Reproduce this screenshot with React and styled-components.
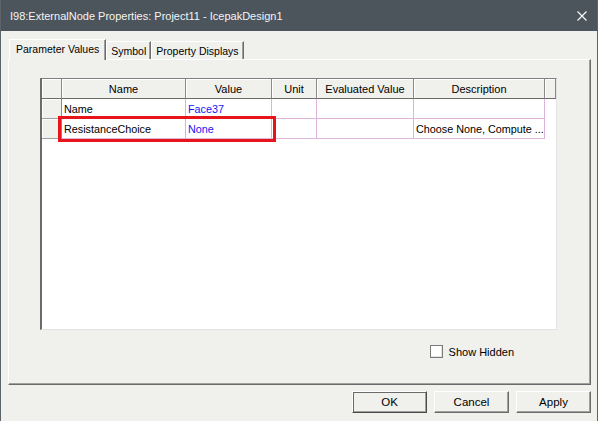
import React from "react";
import styled, { createGlobalStyle } from "styled-components";

const GlobalStyle = createGlobalStyle`
  html, body {
    margin: 0;
    padding: 0;
    background: #f0f0ec;
  }
  * {
    box-sizing: border-box;
  }
`;

const Window = styled.div`
  width: 598px;
  height: 421px;
  display: flex;
  flex-direction: column;
  background: #f0f0ec;
  border-left: 1px solid #5c6469;
  border-right: 1px solid #5c6469;
  font-family: "Liberation Sans", Arial, sans-serif;
  font-size: 11px;
  color: #000;
  overflow: hidden;
`;

const TitleBar = styled.div`
  height: 31px;
  flex: none;
  display: flex;
  align-items: center;
  justify-content: space-between;
  background: #4b555b;
  color: #f4f4f4;
  font-size: 11px;
  padding: 0 10px 0 9px;
`;

const CloseIcon = styled.svg`
  width: 10px;
  height: 10px;
`;

const Body = styled.div`
  flex: 1;
  display: flex;
  flex-direction: column;
  padding: 8px 6px 0 7px;
`;

const TabStrip = styled.div`
  display: flex;
  align-items: flex-end;
  height: 20px;
  padding-left: 1px;
  position: relative;
  z-index: 1;
`;

const Tab = styled.div`
  height: ${(p) => (p.$active ? "21px" : "18px")};
  margin-bottom: ${(p) => (p.$active ? "-1px" : "0")};
  padding: ${(p) => (p.$active ? "0 6px 3px 6px" : "0 4px")};
  display: flex;
  align-items: center;
  background: #f0f0ec;
  border-top: 1px solid #ffffff;
  border-left: 1px solid #ffffff;
  border-right: 1px solid #6b6b6b;
  box-shadow: inset -1px 0 0 #a0a0a0;
  font-size: 10.5px;
  white-space: nowrap;
`;

const Panel = styled.div`
  height: 326px;
  display: flex;
  flex-direction: column;
  align-items: flex-start;
  border-top: 1px solid #ffffff;
  border-left: 1px solid #ffffff;
  border-right: 1px solid #6b6b6b;
  border-bottom: 1px solid #6b6b6b;
  box-shadow: inset -1px -1px 0 #a0a0a0;
  padding: 18px 0 0 31px;
`;

const TableBox = styled.div`
  position: relative;
  width: 517px;
  height: 252px;
  background: #ffffff;
  border-top: 1px solid #808080;
  border-left: 2px solid #6b6b6b;
  border-right: 1px solid #e3e3e3;
  border-bottom: 1px solid #e3e3e3;
`;

const Grid = styled.div`
  display: grid;
  grid-template-columns: 20px 124px 86px 45px 97px 131px 11px;
  grid-auto-rows: 20px;
`;

const HeadCell = styled.div`
  display: flex;
  align-items: center;
  justify-content: center;
  background: #f0f0ec;
  border-right: 1px solid #8a8a8a;
  border-bottom: 1px solid #6b6b6b;
  box-shadow: inset 1px 1px 0 #ffffff;
  font-size: 11px;
  height: 20px;
`;

const RowHead = styled.div`
  background: #f0f0ec;
  border-right: 1px solid #8a8a8a;
  border-bottom: 1px solid #a0a0a0;
  box-shadow: inset 1px 1px 0 #ffffff;
`;

const Cell = styled.div`
  display: flex;
  align-items: center;
  padding-left: 2px;
  color: ${(p) => (p.$blue ? "#1515f0" : "#000")};
  border-right: 1px solid ${(p) => p.$line || "#dcb4dc"};
  border-bottom: 1px solid #dcb4dc;
  font-size: 10.8px;
  white-space: nowrap;
  overflow: hidden;
`;

const Filler = styled.div``;

const Highlight = styled.div`
  position: absolute;
  left: 16px;
  top: 37px;
  width: 218px;
  height: 26px;
  border: 3px solid #e8141c;
  pointer-events: none;
`;

const OptionsRow = styled.div`
  align-self: stretch;
  display: flex;
  justify-content: flex-end;
  padding: 15px 76px 0 0;
`;

const CheckLabel = styled.label`
  display: flex;
  align-items: center;
  gap: 6px;
  font-size: 11px;
`;

const CheckBox = styled.span`
  width: 13px;
  height: 13px;
  background: #ffffff;
  border: 1px solid #7a7a7a;
  box-shadow: inset -1px -1px 0 #e3e3e3;
`;

const ButtonRow = styled.div`
  display: flex;
  justify-content: flex-end;
  gap: 7px;
  padding-top: 6px;
`;

const Button = styled.button`
  width: 75px;
  height: 22px;
  font-family: "Liberation Sans", Arial, sans-serif;
  font-size: 11.5px;
  color: #000;
  background: #f0f0ec;
  border-top: 1px solid #ffffff;
  border-left: 1px solid #ffffff;
  border-right: 1px solid ${(p) => (p.$default ? "#4a4a4a" : "#6b6b6b")};
  border-bottom: 1px solid ${(p) => (p.$default ? "#4a4a4a" : "#6b6b6b")};
  box-shadow: ${(p) =>
    p.$default
      ? "inset 1px 1px 0 #6b6b6b, inset -1px -1px 0 #a0a0a0"
      : "inset -1px -1px 0 #a0a0a0"};
  padding: 0;
`;

const columns = ["Name", "Value", "Unit", "Evaluated Value", "Description"];

const rows = [
  { name: "Name", value: "Face37", desc: "" },
  { name: "ResistanceChoice", value: "None", desc: "Choose None, Compute ..." },
];

export default function App() {
  return (
    <>
      <GlobalStyle />
      <Window>
        <TitleBar>
          <span>I98:ExternalNode Properties: Project11 - IcepakDesign1</span>
          <CloseIcon viewBox="0 0 10 10">
            <path d="M0.5 0.5 L9.5 9.5 M9.5 0.5 L0.5 9.5" stroke="#ffffff" strokeWidth="1.1" />
          </CloseIcon>
        </TitleBar>
        <Body>
          <TabStrip>
            <Tab $active>Parameter Values</Tab>
            <Tab>Symbol</Tab>
            <Tab>Property Displays</Tab>
          </TabStrip>
          <Panel>
            <TableBox>
              <Grid>
                <HeadCell />
                {columns.map((c) => (
                  <HeadCell key={c}>{c}</HeadCell>
                ))}
                <HeadCell />
                {rows.map((r) => (
                  <React.Fragment key={r.name}>
                    <RowHead />
                    <Cell $line="#c4c4c4">{r.name}</Cell>
                    <Cell $blue>{r.value}</Cell>
                    <Cell />
                    <Cell />
                    <Cell>{r.desc}</Cell>
                    <Filler />
                  </React.Fragment>
                ))}
              </Grid>
              <Highlight />
            </TableBox>
            <OptionsRow>
              <CheckLabel>
                <CheckBox />
                Show Hidden
              </CheckLabel>
            </OptionsRow>
          </Panel>
          <ButtonRow>
            <Button $default>OK</Button>
            <Button>Cancel</Button>
            <Button>Apply</Button>
          </ButtonRow>
        </Body>
      </Window>
    </>
  );
}
